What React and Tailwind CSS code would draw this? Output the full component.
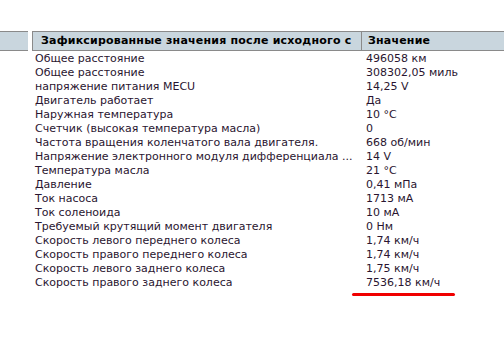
import React from "react";

const rows = [
  ["Общее расстояние", "496058 км"],
  ["Общее расстояние", "308302,05 миль"],
  ["напряжение питания MECU", "14,25 V"],
  ["Двигатель работает", "Да"],
  ["Наружная температура", "10 °C"],
  ["Счетчик (высокая температура масла)", "0"],
  ["Частота вращения коленчатого вала двигателя.", "668 об/мин"],
  ["Напряжение электронного модуля дифференциала ...", "14 V"],
  ["Температура масла", "21 °C"],
  ["Давление", "0,41 мПа"],
  ["Ток насоса", "1713 мА"],
  ["Ток соленоида", "10 мА"],
  ["Требуемый крутящий момент двигателя", "0 Нм"],
  ["Скорость левого переднего колеса", "1,74 км/ч"],
  ["Скорость правого переднего колеса", "1,74 км/ч"],
  ["Скорость левого заднего колеса", "1,75 км/ч"],
  ["Скорость правого заднего колеса", "7536,18 км/ч"],
];

export default function App() {
  return (
    <div
      className="w-[504px] h-[343px] bg-white overflow-hidden text-[#2a1530]"
      style={{ fontFamily: "'DejaVu Sans', Verdana, sans-serif" }}
    >
      <div className="h-[31px]" />
      {/* header */}
      <div className="flex h-[20px] text-[11px] font-bold text-black tracking-[0.2px]">
        <div className="w-[28px] bg-[#c9d6de] border-y border-[#8a8a8a]" />
        <div className="w-[4px]" />
        <div className="w-[330px] bg-[#c9d6de] border border-[#8a8a8a] flex items-center pl-[8px] overflow-hidden whitespace-nowrap">
          Зафиксированные значения после исходного с
        </div>
        <div className="flex-1 bg-[#c9d6de] border-y border-[#8a8a8a] flex items-center pl-[6px]">
          Значение
        </div>
      </div>
      {/* rows */}
      <div className="flex flex-col text-[11px] leading-[14px] pt-[1px]">
        {rows.map(([name, value], i) => (
          <div key={i} className="flex h-[14px]">
            <div className="w-[32px]" />
            <div className="w-[330px] pl-[3px] whitespace-nowrap overflow-hidden">
              {name}
            </div>
            <div className="flex-1 pl-[4px] whitespace-nowrap">{value}</div>
          </div>
        ))}
      </div>
      <div className="flex mt-[3px]">
        <div className="w-[352px]" />
        <div className="w-[103px] h-[3px] rounded-full bg-[#f00000]" />
      </div>
    </div>
  );
}
